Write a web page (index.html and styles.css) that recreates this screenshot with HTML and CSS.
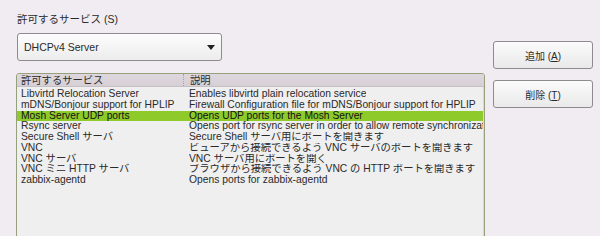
FILE: index.html
```html
<!DOCTYPE html>
<html lang="ja">
<head>
  <meta charset="UTF-8" />
  <title>許可するサービス</title>
  <link rel="stylesheet" href="styles.css">
</head>
<body>
  <div class="dialog">
    <div class="main">
      <div class="label">許可するサービス (S)</div>
      <div class="combo">
        <span>DHCPv4 Server</span>
        <span class="arrow"></span>
      </div>
      <div class="list">
        <div class="list-head">
          <div class="head-name">許可するサービス</div>
          <div class="head-desc">説明</div>
        </div>
        <div class="list-body">
          <div class="row"><div class="col-name">Libvirtd Relocation Server</div><div class="col-desc">Enables libvirtd plain relocation service</div></div>
          <div class="row"><div class="col-name">mDNS/Bonjour support for HPLIP</div><div class="col-desc">Firewall Configuration file for mDNS/Bonjour support for HPLIP</div></div>
          <div class="row selected"><div class="col-name">Mosh Server UDP ports</div><div class="col-desc">Opens UDP ports for the Mosh Server</div></div>
          <div class="row"><div class="col-name">Rsync server</div><div class="col-desc">Opens port for rsync server in order to allow remote synchronization</div></div>
          <div class="row"><div class="col-name">Secure Shell サーバ</div><div class="col-desc">Secure Shell サーバ用にポートを開きます</div></div>
          <div class="row"><div class="col-name">VNC</div><div class="col-desc">ビューアから接続できるよう VNC サーバのポートを開きます</div></div>
          <div class="row"><div class="col-name">VNC サーバ</div><div class="col-desc">VNC サーバ用にポートを開く</div></div>
          <div class="row"><div class="col-name">VNC ミニ HTTP サーバ</div><div class="col-desc">ブラウザから接続できるよう VNC の HTTP ポートを開きます</div></div>
          <div class="row"><div class="col-name">zabbix-agentd</div><div class="col-desc">Opens ports for zabbix-agentd</div></div>
        </div>
      </div>
    </div>
    <div class="side">
      <button class="btn">追加 (<u>A</u>)</button>
      <button class="btn">削除 (<u>T</u>)</button>
    </div>
  </div>
</body>
</html>
```

FILE: styles.css
```css
body {
  margin: 0;
  background: #f1ecf1;
  font-family: "Liberation Sans", "Noto Sans CJK JP", sans-serif;
  color: #2a2a2a;
  overflow: hidden;
}

.dialog {
  display: flex;
  padding: 13px 0 0 16px;
}

.main {
  width: 469px;
}

.label {
  font-size: 10.5px;
  line-height: 13px;
  padding-left: 1px;
}

.combo {
  margin: 7px 0 0 1px;
  width: 191px;
  height: 26px;
  padding: 0 6px;
  border: 1px solid #8e8a8e;
  border-radius: 3px;
  background: linear-gradient(#fdfdfd, #ececec);
  display: flex;
  align-items: center;
  justify-content: space-between;
  font-size: 10.5px;
}

.arrow {
  width: 0;
  height: 0;
  border-left: 4px solid transparent;
  border-right: 4px solid transparent;
  border-top: 5px solid #222;
}

.list {
  margin-top: 12px;
  height: 180px;
  border: 1px solid #97a07c;
  border-radius: 3px 3px 0 0;
  background: #efefef;
  font-size: 10.3px;
  overflow: hidden;
}

.list-head {
  display: flex;
  height: 12px;
  line-height: 13px;
  background: linear-gradient(#ded7dd, #d6cfd5);
  border-bottom: 1px solid #c6c0c5;
}

.head-name {
  width: 162px;
  padding-left: 4px;
  flex-shrink: 0;
  border-right: 1px dotted #a8a2a7;
}

.head-desc {
  padding-left: 6px;
}

.list-body {
  padding-top: 2px;
  border-right: 1px solid #d8d8d8;
  height: 100%;
}

.row {
  display: flex;
  height: 10.75px;
  line-height: 10.75px;
  white-space: nowrap;
}

.row.selected {
  background: #8fca2b;
  color: #111;
}

.col-name {
  width: 168px;
  padding-left: 4px;
  flex-shrink: 0;
}

.col-desc {
  overflow: hidden;
}

.side {
  display: flex;
  flex-direction: column;
  gap: 11px;
  padding: 28px 0 0 8px;
}

.btn {
  width: 100px;
  height: 28px;
  border: 1px solid #8e8a8e;
  border-radius: 3px;
  background: linear-gradient(#fbfbfb, #e9e9e9);
  font-family: "Liberation Sans", "Noto Sans CJK JP", sans-serif;
  font-size: 10px;
  color: #2a2a2a;
  padding: 0;
}
```
